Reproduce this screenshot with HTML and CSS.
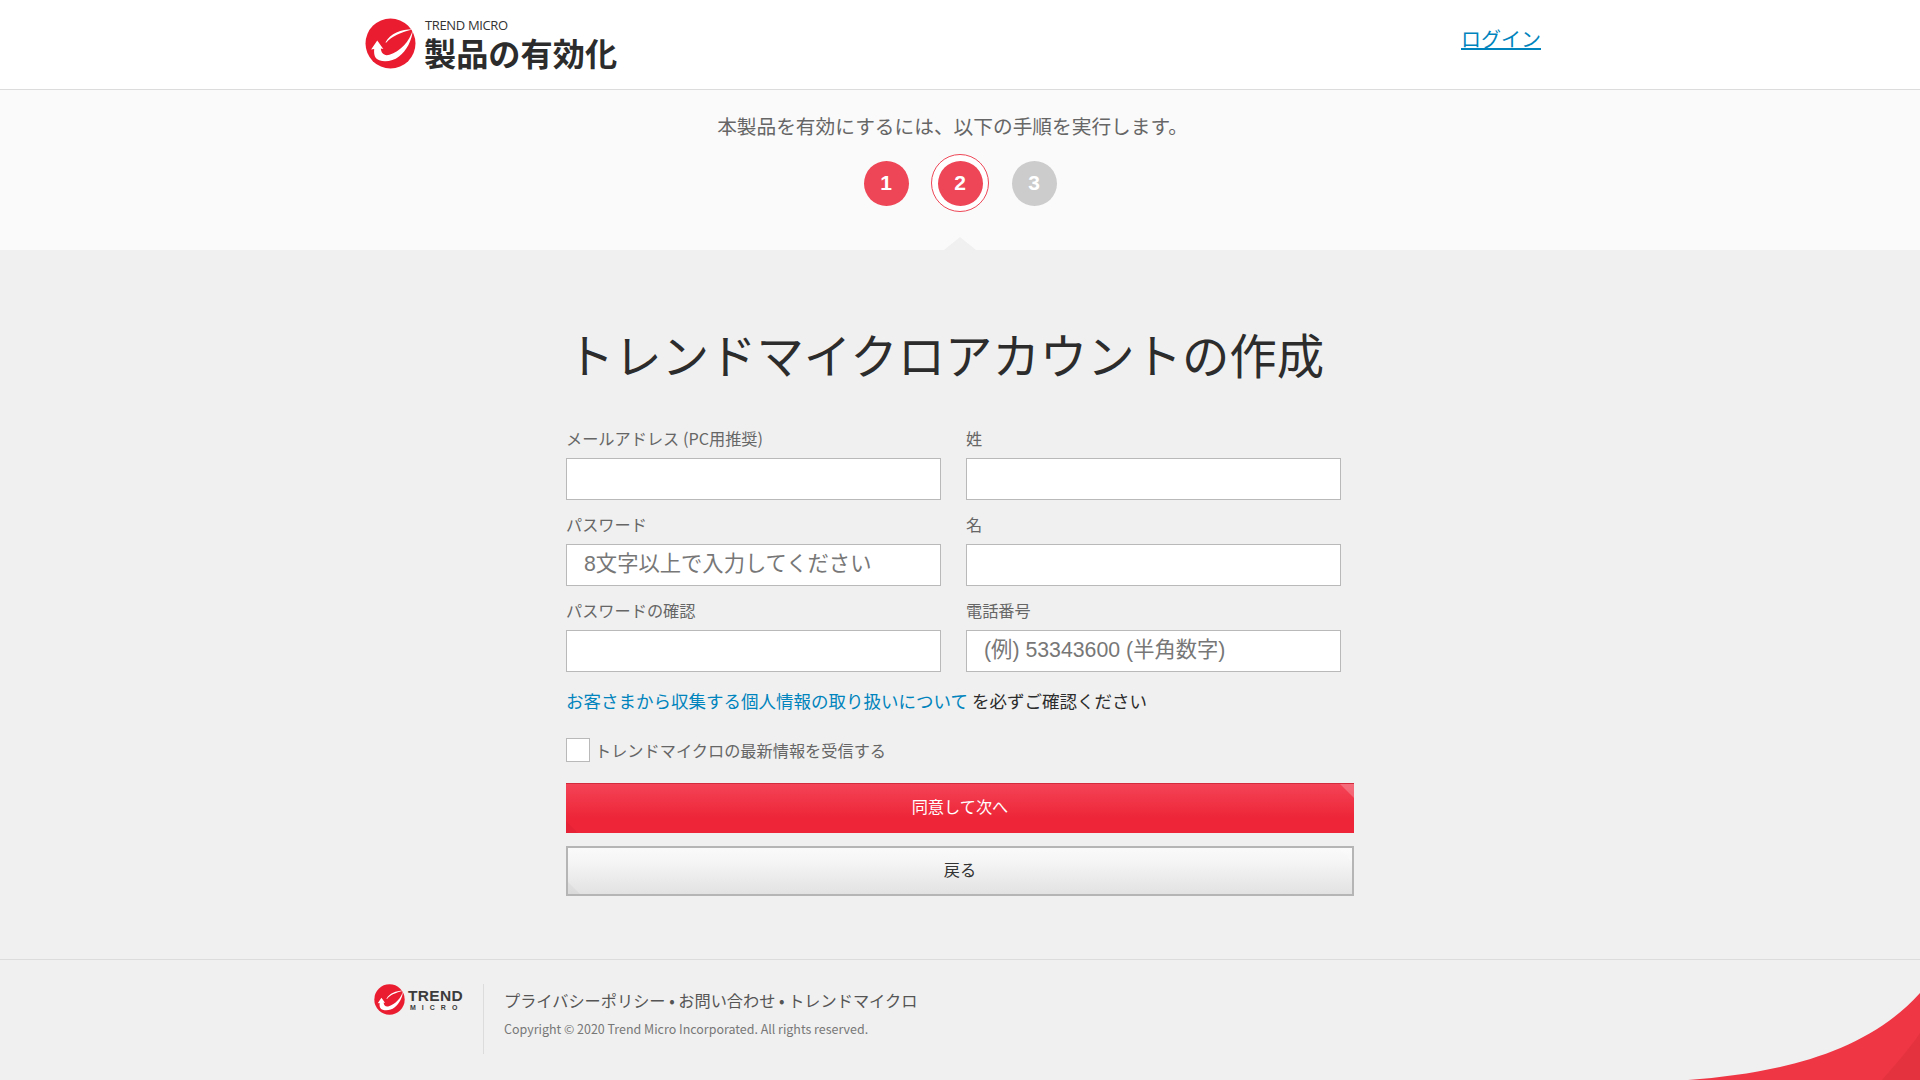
FILE: index.html
```html
<!DOCTYPE html>
<html lang="ja">
<head>
<meta charset="utf-8">
<title>製品の有効化</title>
<link rel="stylesheet" href="styles.css">
</head>
<body>
<header class="top">
  <div class="top-inner">
    <div class="brand">
      <svg class="logo" viewBox="0 0 50 50" aria-hidden="true">
        <circle cx="25" cy="25" r="24.5" fill="#ea1c30"/>
        <path d="M47 11 C35 11 25 15 20 24 L21 24 C26 18 35 14 47 11Z" fill="#fff"/>
        <path d="M47 11 C44 23 34 33 24 36 C19 37.5 16 35 15.5 30 L18 30.5 L12 22 L6 31 L9 30.5 C8.5 37 10 40 14 41.5 C20 43.5 28 42 33 38 C41 32 46 22 47 11Z" fill="#fff"/>
      </svg>
      <div class="brand-text">
        <div class="brand-sub">TREND MICRO</div>
        <div class="brand-title">製品の有効化</div>
      </div>
    </div>
    <a class="login" href="#">ログイン</a>
  </div>
</header>

<section class="steps">
  <p class="steps-text">本製品を有効にするには、以下の手順を実行します。</p>
  <div class="steps-row">
    <div class="step"><span class="dot">1</span></div>
    <div class="step current"><span class="dot">2</span></div>
    <div class="step"><span class="dot off">3</span></div>
  </div>
  <span class="notch"></span>
</section>

<main class="main">
  <h1 class="title">トレンドマイクロアカウントの作成</h1>
  <form class="form">
    <div class="grid">
      <div class="field"><label class="label">メールアドレス (PC用推奨)</label><input class="input" type="text"></div>
      <div class="field"><label class="label">姓</label><input class="input" type="text"></div>
      <div class="field"><label class="label">パスワード</label><input class="input" type="text" placeholder="8文字以上で入力してください"></div>
      <div class="field"><label class="label">名</label><input class="input" type="text"></div>
      <div class="field"><label class="label">パスワードの確認</label><input class="input" type="text"></div>
      <div class="field"><label class="label">電話番号</label><input class="input" type="text" placeholder="(例) 53343600 (半角数字)"></div>
    </div>
    <p class="notice"><a href="#">お客さまから収集する個人情報の取り扱いについて</a> を必ずご確認ください</p>
    <label class="check"><span class="box"></span>トレンドマイクロの最新情報を受信する</label>
    <button class="btn primary" type="button">同意して次へ</button>
    <button class="btn secondary" type="button">戻る</button>
  </form>
</main>

<footer class="foot">
  <div class="foot-inner">
    <div class="foot-logo">
      <svg class="foot-mark" viewBox="0 0 50 50" aria-hidden="true">
        <circle cx="25" cy="25" r="24.5" fill="#ea1c30"/>
        <path d="M47 11 C35 11 25 15 20 24 L21 24 C26 18 35 14 47 11Z" fill="#fff"/>
        <path d="M47 11 C44 23 34 33 24 36 C19 37.5 16 35 15.5 30 L18 30.5 L12 22 L6 31 L9 30.5 C8.5 37 10 40 14 41.5 C20 43.5 28 42 33 38 C41 32 46 22 47 11Z" fill="#fff"/>
      </svg>
      <div class="foot-word"><span class="w1">TREND</span><span class="w2">MICRO</span></div>
    </div>
    <div class="foot-text">
      <div class="foot-links">プライバシーポリシー • お問い合わせ • トレンドマイクロ</div>
      <div class="foot-copy">Copyright © 2020 Trend Micro Incorporated. All rights reserved.</div>
    </div>
  </div>
  <svg class="swoosh" viewBox="0 0 232 87" aria-hidden="true">
    <path d="M0 87 C92 80 178 60 232 0 V87Z" fill="#ee3645"/>
    <path d="M194 87 C209 70 222 55 232 40 V87Z" fill="#e5323f"/>
  </svg>
</footer>
</body>
</html>
```
FILE: styles.css
```css
* { box-sizing: border-box; }
html, body { margin: 0; height: 100%; }
body {
  display: flex;
  flex-direction: column;
  height: 1080px;
  overflow: hidden;
  background: #f0f0f0;
  color: #666;
  font-family: "Noto Sans CJK JP", "Noto Sans", sans-serif;
}
.top {
  height: 90px;
  background: #fff;
  border-bottom: 1px solid #dcdcdc;
}
.top-inner {
  width: 1200px;
  margin: 0 auto;
  padding: 18px 19px 0 5px;
  display: flex;
  justify-content: space-between;
  align-items: flex-start;
}
.brand { display: flex; align-items: flex-start; gap: 8px; }
.logo { width: 51px; height: 51px; display: block; }
.brand-text { display: flex; flex-direction: column; }
.brand-sub {
  font-family: "Open Sans", sans-serif;
  font-size: 13px;
  line-height: 13px;
  letter-spacing: -.35px;
  color: #333;
  margin: 1px 0 0 1px;
}
.brand-title {
  font-size: 32.2px;
  line-height: 36px;
  margin-top: 2px;
  font-weight: 700;
  color: #2c2c2c;
}
.login {
  font-size: 20px;
  line-height: 28px;
  color: #0084bd;
  margin-top: 7px;
}
.steps {
  position: relative;
  height: 160px;
  background: #fafafa;
  display: flex;
  flex-direction: column;
  align-items: center;
  padding-top: 22px;
}
.steps-text {
  margin: 0;
  padding-right: 15px;
  font-size: 19.7px;
  line-height: 28px;
  color: #666;
}
.steps-row {
  display: flex;
  gap: 16px;
  margin-top: 14px;
  align-items: center;
}
.step {
  width: 58px;
  height: 58px;
  display: flex;
  align-items: center;
  justify-content: center;
  border-radius: 50%;
  border: 1px solid transparent;
}
.step.current { border-color: #ee4656; background: #fff; }
.dot {
  width: 45px;
  height: 45px;
  border-radius: 50%;
  background: #ee4656;
  color: #fff;
  font: 700 21px/43px "Liberation Sans", sans-serif;
  text-align: center;
}
.dot.off { background: #ccc; }
.notch {
  position: absolute;
  left: 944px;
  bottom: 0;
  border-left: 16px solid transparent;
  border-right: 16px solid transparent;
  border-bottom: 13px solid #f0f0f0;
}
.main {
  flex: 1;
  display: flex;
  flex-direction: column;
  align-items: center;
  padding-top: 69px;
}
.title {
  margin: 0;
  padding-right: 29px;
  font-size: 47.4px;
  line-height: 70px;
  font-weight: 400;
  color: #2c2c2c;
}
.form { width: 788px; margin-top: 37px; }
.grid {
  display: grid;
  grid-template-columns: 375px 375px;
  column-gap: 25px;
  row-gap: 12px;
}
.field { display: flex; flex-direction: column; }
.label {
  font-size: 16.2px;
  line-height: 25px;
  height: 32px;
  color: #666;
}
.input {
  width: 375px;
  height: 42px;
  padding: 0 17px 2px;
  border: 1px solid #b9b9b9;
  background: #fff;
  border-radius: 0;
  font-family: "Liberation Sans", "Noto Sans CJK JP", sans-serif;
  font-size: 21.3px;
  outline: 0;
}
.input::placeholder { color: #777; opacity: 1; }
.notice {
  margin: 16px 0 0;
  font-size: 17.5px;
  line-height: 26px;
  color: #2c2c2c;
}
.notice a { color: #0084bd; text-decoration: none; }
.check {
  display: flex;
  align-items: center;
  margin-top: 23px;
  font-size: 16.2px;
  line-height: 24px;
  color: #666;
}
.box {
  width: 24px;
  height: 24px;
  background: #fff;
  border: 1px solid #b9b9b9;
  margin: 1px 5px 0 0;
}
.btn {
  display: block;
  position: relative;
  overflow: hidden;
  width: 100%;
  height: 50px;
  font-family: "Noto Sans CJK JP", sans-serif;
  font-size: 16.2px;
  padding: 0 0 5px;
  border-radius: 0;
}
.btn::before, .btn::after { content: ""; position: absolute; width: 0; height: 0; }
.btn::before { top: 0; right: 0; border-top: 14px solid rgba(255,255,255,.22); border-left: 14px solid transparent; }
.btn::after { bottom: 0; left: 0; border-bottom: 12px solid rgba(0,0,0,.03); border-right: 12px solid transparent; }
.primary {
  margin-top: 21px;
  color: #fff;
  border: 0;
  border-top: 1px solid #d22c3c;
  background: linear-gradient(#f44356, #ee2538 70%, #ee2538);
}
.secondary {
  margin-top: 13px;
  color: #333;
  border: 2px solid #b5b5b5;
  background: linear-gradient(#fafafa, #f5f5f5 30%, #e2e2e2);
}
.foot {
  position: relative;
  height: 121px;
  border-top: 1px solid #dcdcdc;
  background: #f0f0f0;
}
.foot-inner {
  width: 1200px;
  margin: 0 auto;
  padding: 24px 0 0 14px;
  display: flex;
  align-items: flex-start;
}
.foot-logo {
  width: 110px;
  height: 70px;
  display: flex;
  align-items: flex-start;
  gap: 3px;
  border-right: 1px solid #dcdcdc;
}
.foot-mark { width: 31px; height: 31px; display: block; flex: none; }
.foot-word { display: flex; flex-direction: column; font-family: "Liberation Sans", sans-serif; font-weight: 700; color: #3c3c3c; padding-top: 5px; }
.w1 { font-size: 15.5px; line-height: 14px; letter-spacing: .3px; }
.w2 { font-size: 7px; line-height: 9px; letter-spacing: 6px; padding-left: 2px; }
.foot-text { padding: 6px 0 0 20px; }
.foot-links { font-size: 16.2px; line-height: 20px; color: #555; }
.foot-copy { font-size: 12.46px; line-height: 20px; margin-top: 9px; color: #777; }
.swoosh {
  position: absolute;
  right: 0;
  bottom: 0;
  width: 232px;
  height: 87px;
  display: block;
}
```
